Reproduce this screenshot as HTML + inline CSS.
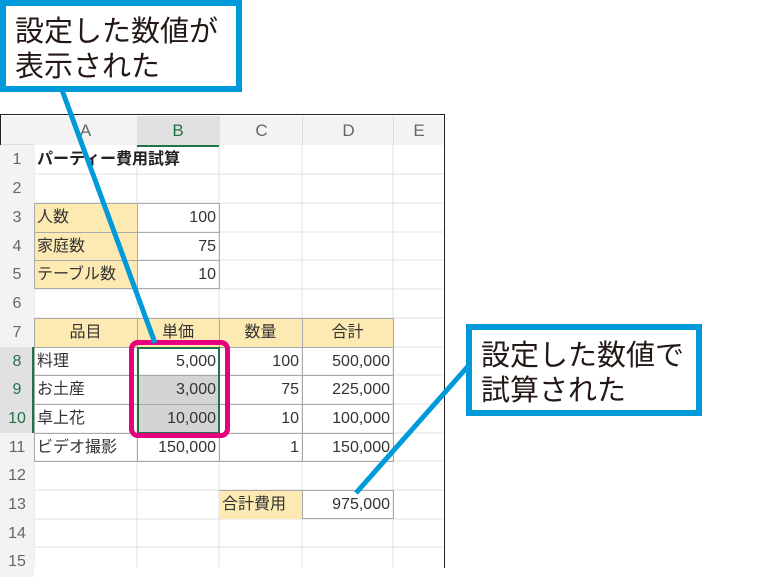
<!DOCTYPE html>
<html><head><meta charset="utf-8"><style>
body{margin:0;width:783px;height:567px;background:#fff;position:relative;overflow:hidden;font-family:"Liberation Sans","Noto Sans CJK JP",sans-serif;}
.a{position:absolute;box-sizing:border-box}
.c{position:absolute;box-sizing:border-box;font-size:16px;color:#333;line-height:30px;white-space:nowrap;padding:0 3px}
.r{text-align:right}
.m{text-align:center}
.rh{position:absolute;left:0;width:34px;text-align:center;font-size:16px;color:#666;line-height:30px;background:#f3f3f3}
.ch{position:absolute;top:116px;height:29px;text-align:center;font-size:17px;color:#666;line-height:30px;background:#f3f3f3}
.box{position:absolute;box-sizing:border-box;border:6px solid #0099d9;background:#fff;font-size:29px;line-height:35px;color:#231815;padding:9px 0 0 9px;font-family:"Liberation Sans","Noto Sans CJK JP",sans-serif}
</style></head><body>
<div class="a" style="left:0;top:114px;width:445px;height:454px;border:1.5px solid #222;border-bottom:none;background:#fff"></div>
<svg class="a" style="left:0;top:0" width="783" height="567">
<g stroke="#e1e1e1" stroke-width="1">
<line x1="34" y1="145" x2="34" y2="567"/>
<line x1="137" y1="116" x2="137" y2="567"/>
<line x1="219" y1="116" x2="219" y2="567"/>
<line x1="302" y1="116" x2="302" y2="567"/>
<line x1="393" y1="116" x2="393" y2="567"/>
<line x1="1" y1="174" x2="443" y2="174"/><line x1="1" y1="203" x2="443" y2="203"/><line x1="1" y1="232" x2="443" y2="232"/><line x1="1" y1="260" x2="443" y2="260"/><line x1="1" y1="289" x2="443" y2="289"/><line x1="1" y1="318" x2="443" y2="318"/><line x1="1" y1="347" x2="443" y2="347"/><line x1="1" y1="375" x2="443" y2="375"/><line x1="1" y1="404" x2="443" y2="404"/><line x1="1" y1="433" x2="443" y2="433"/><line x1="1" y1="461" x2="443" y2="461"/><line x1="1" y1="490" x2="443" y2="490"/><line x1="1" y1="519" x2="443" y2="519"/><line x1="1" y1="547" x2="443" y2="547"/>
</g>
</svg>
<div class="a" style="left:1px;top:116px;width:442px;height:29px;background:#f3f3f3;border-bottom:1px solid #ddd"></div>
<div class="a" style="left:1px;top:145px;width:33px;height:422px;background:#f3f3f3;border-right:1px solid #ddd"></div>
<div class="ch" style="left:34px;width:103px">A</div>
<div class="ch" style="left:137px;width:82px;background:#e1e1e1;color:#217346;border-bottom:2px solid #217346">B</div>
<div class="ch" style="left:219px;width:83px;border-left:1px solid #ddd">C</div>
<div class="ch" style="left:302px;width:91px;border-left:1px solid #ddd">D</div>
<div class="ch" style="left:393px;width:50px;border-left:1px solid #ddd">E</div>
<div class="rh" style="top:145px">1</div><div class="rh" style="top:174px">2</div><div class="rh" style="top:203px">3</div><div class="rh" style="top:232px">4</div><div class="rh" style="top:260px">5</div><div class="rh" style="top:289px">6</div><div class="rh" style="top:318px">7</div>
<div class="rh" style="top:347px;background:#e1e1e1;color:#217346;height:28px">8</div><div class="rh" style="top:375px;background:#e1e1e1;color:#217346;height:29px">9</div><div class="rh" style="top:404px;background:#e1e1e1;color:#217346;height:29px">10</div>
<div class="a" style="left:32px;top:347px;width:2px;height:86px;background:#217346"></div>
<div class="rh" style="top:433px">11</div><div class="rh" style="top:461px">12</div><div class="rh" style="top:490px">13</div><div class="rh" style="top:519px">14</div><div class="rh" style="top:547px">15</div>
<div class="c" style="left:34px;top:145px;font-weight:bold;color:#222">パーティー費用試算</div>
<div class="c" style="left:34px;top:203px;width:104px;height:86px;background:#fde9b2;border:1px solid #aaa"></div>
<div class="c" style="left:137px;top:203px;width:83px;height:86px;border:1px solid #aaa;border-left:none"></div>
<div class="a" style="left:34px;top:232px;width:186px;height:1px;background:#aaa"></div>
<div class="a" style="left:34px;top:260px;width:186px;height:1px;background:#aaa"></div>
<div class="c" style="left:34px;top:203px">人数</div><div class="c" style="left:34px;top:232px">家庭数</div><div class="c" style="left:34px;top:260px">テーブル数</div>
<div class="c r" style="left:137px;top:203px;width:82px">100</div><div class="c r" style="left:137px;top:232px;width:82px">75</div><div class="c r" style="left:137px;top:260px;width:82px">10</div>
<div class="a" style="left:34px;top:318px;width:360px;height:29px;background:#fde9b2"></div>
<div class="a" style="left:137px;top:375px;width:82px;height:58px;background:#d4d4d4"></div>
<svg class="a" style="left:0;top:0" width="783" height="567"><g stroke="#a8a8a8" stroke-width="1" fill="none">
<rect x="34.5" y="318.5" width="359" height="143"/>
<line x1="137.5" y1="318" x2="137.5" y2="462"/><line x1="219.5" y1="318" x2="219.5" y2="462"/><line x1="302.5" y1="318" x2="302.5" y2="462"/>
<line x1="34" y1="347.5" x2="394" y2="347.5"/><line x1="34" y1="375.5" x2="394" y2="375.5"/><line x1="34" y1="404.5" x2="394" y2="404.5"/><line x1="34" y1="433.5" x2="394" y2="433.5"/>
<rect x="219.5" y="490.5" width="174" height="28"/><line x1="302.5" y1="490" x2="302.5" y2="519"/>
</g></svg>
<div class="a" style="left:219px;top:491px;width:83px;height:28px;background:#fde9b2"></div>
<div class="a" style="left:137px;top:347px;width:83px;height:87px;border:2px solid #217346"></div>
<div class="c m" style="left:34px;top:318px;width:103px">品目</div><div class="c m" style="left:137px;top:318px;width:82px">単価</div><div class="c m" style="left:219px;top:318px;width:83px">数量</div><div class="c m" style="left:302px;top:318px;width:91px">合計</div>
<div class="c" style="left:34px;top:347px">料理</div><div class="c" style="left:34px;top:375px">お土産</div><div class="c" style="left:34px;top:404px">卓上花</div><div class="c" style="left:34px;top:433px">ビデオ撮影</div>
<div class="c r" style="left:137px;top:347px;width:82px">5,000</div><div class="c r" style="left:137px;top:375px;width:82px">3,000</div><div class="c r" style="left:137px;top:404px;width:82px">10,000</div><div class="c r" style="left:137px;top:433px;width:82px">150,000</div>
<div class="c r" style="left:219px;top:347px;width:83px">100</div><div class="c r" style="left:219px;top:375px;width:83px">75</div><div class="c r" style="left:219px;top:404px;width:83px">10</div><div class="c r" style="left:219px;top:433px;width:83px">1</div>
<div class="c r" style="left:302px;top:347px;width:91px">500,000</div><div class="c r" style="left:302px;top:375px;width:91px">225,000</div><div class="c r" style="left:302px;top:404px;width:91px">100,000</div><div class="c r" style="left:302px;top:433px;width:91px">150,000</div>
<div class="c" style="left:219px;top:490px">合計費用</div><div class="c r" style="left:302px;top:490px;width:91px">975,000</div>
<div class="a" style="left:129px;top:340px;width:101px;height:98px;border:5px solid #e4007f;border-radius:9px"></div>
<svg class="a" style="left:0;top:0" width="783" height="567"><g stroke="#0099d9" stroke-width="5" stroke-linecap="butt">
<line x1="62" y1="90" x2="155" y2="343"/>
<line x1="470" y1="364" x2="356" y2="493"/>
</g></svg>
<div class="box" style="left:0;top:0;width:242px;height:92px">設定した数値が<br>表示された</div>
<div class="box" style="left:466px;top:324px;width:236px;height:92px">設定した数値で<br>試算された</div>
</body></html>
